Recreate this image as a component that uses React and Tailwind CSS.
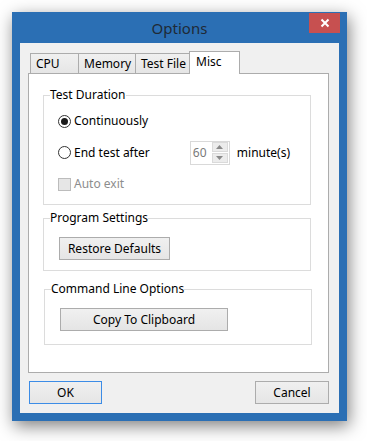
import React from "react";

const font = { fontFamily: '"Noto Sans", "Open Sans", sans-serif' };

function Btn({ children, className = "" }) {
  return (
    <div
      className={
        "flex items-center justify-center border bg-gradient-to-b from-[#f0f0f0] to-[#e5e5e5] text-[12px] leading-[16px] text-black " +
        className
      }
    >
      {children}
    </div>
  );
}

function Tab({ label, w, selected }) {
  if (selected) {
    return (
      <div
        className={
          "relative z-10 -ml-px flex h-[23px] items-start border border-b-0 border-[#acacac] bg-white pl-[6px] pt-[2px] text-[12px] leading-[16px] " +
          w
        }
      >
        {label}
      </div>
    );
  }
  return (
    <div
      className={
        "-ml-px flex h-[21px] items-center border border-b-0 border-[#acacac] bg-gradient-to-b from-[#f0f0f0] to-[#e5e5e5] pl-[5px] text-[12px] leading-[16px] first:ml-0 " +
        w
      }
    >
      {label}
    </div>
  );
}

export default function App() {
  return (
    <div className="h-[441px] w-[367px] bg-white pl-[12px] pt-[12px]" style={font}>
      <div className="flex h-[409px] w-[335px] flex-col bg-[#2b6fb4] shadow-[2px_5px_16px_rgba(0,0,0,0.5)]">
        {/* Title bar */}
        <div className="relative flex h-[31px] items-center justify-center">
          <span className="text-[15px] leading-[20px] text-[#1f2a36]">Options</span>
          <div className="absolute right-[7px] top-[1px] flex h-[20px] w-[31px] items-center justify-center bg-[#c75050]">
            <svg width="10" height="10" viewBox="0 0 10 10">
              <path d="M1.5 1.5 L8.5 8.5 M8.5 1.5 L1.5 8.5" stroke="white" strokeWidth="2" />
            </svg>
          </div>
        </div>

        {/* Client */}
        <div className="mx-[8px] mb-[8px] flex flex-1 flex-col bg-[#f0f0f0] pl-[8px] pr-[10px] pt-[8px]">
          {/* Tabs */}
          <div className="-mb-px flex h-[23px] items-end pl-[2px]">
            <Tab label="CPU" w="w-[49px]" />
            <Tab label="Memory" w="w-[58px]" />
            <Tab label="Test File" w="w-[55px]" />
            <Tab label="Misc" w="w-[51px]" selected />
          </div>

          {/* Panel */}
          <div className="h-[300px] border border-[#acacac] bg-white pl-[14px] pt-[13px] text-[12px] leading-[16px] text-black">
            {/* Test Duration */}
            <fieldset className="w-[268px] border border-[#dcdcdc] pb-[12px]">
              <legend className="ml-[6px] leading-[16px]">Test Duration</legend>
              <div className="flex flex-col pl-[14px] pt-[10px]">
                <div className="flex h-[16px] items-center">
                  <span className="flex h-[13px] w-[13px] items-center justify-center rounded-full border border-[#333]">
                    <span className="h-[7px] w-[7px] rounded-full bg-[#1a1a1a]" />
                  </span>
                  <span className="ml-[3px]">Continuously</span>
                </div>
                <div className="mt-[12px] flex h-[23px] items-center">
                  <span className="h-[13px] w-[13px] rounded-full border border-[#333]" />
                  <span className="ml-[3px]">End test after</span>
                  <div className="ml-[40px] flex h-[24px] w-[40px] items-center justify-between border border-[#d9d9d9] pl-[2px] pr-[1px]">
                    <span className="text-[#7a7a7a]">60</span>
                    <div className="flex flex-col gap-[1px]">
                      <div className="flex h-[10px] w-[16px] items-center justify-center border border-[#dadada] bg-[#ececec]">
                        <svg width="7" height="4" viewBox="0 0 7 4">
                          <path d="M0 4 L3.5 0 L7 4 Z" fill="#8a8a8a" />
                        </svg>
                      </div>
                      <div className="flex h-[10px] w-[16px] items-center justify-center border border-[#dadada] bg-[#ececec]">
                        <svg width="7" height="4" viewBox="0 0 7 4">
                          <path d="M0 0 L3.5 4 L7 0 Z" fill="#8a8a8a" />
                        </svg>
                      </div>
                    </div>
                  </div>
                  <span className="ml-[7px]">minute(s)</span>
                </div>
                <div className="mt-[12px] flex h-[16px] items-center">
                  <span className="h-[13px] w-[13px] border border-[#bcbcbc] bg-[#e6e6e6]" />
                  <span className="ml-[3px] text-[#8d8d8d]">Auto exit</span>
                </div>
              </div>
            </fieldset>

            {/* Program Settings */}
            <fieldset className="mt-[5px] w-[268px] border border-[#dcdcdc] pb-[10px]">
              <legend className="ml-[6px] leading-[16px]">Program Settings</legend>
              <div className="pl-[15px] pt-[11px]">
                <Btn className="h-[23px] w-[111px] border-[#acacac]">Restore Defaults</Btn>
              </div>
            </fieldset>

            {/* Command Line Options */}
            <fieldset className="ml-px mt-[10px] w-[268px] border border-[#dcdcdc] pb-[13px]">
              <legend className="ml-[6px] leading-[16px]">Command Line Options</legend>
              <div className="pl-[15px] pt-[11px]">
                <Btn className="h-[23px] w-[168px] border-[#acacac]">Copy To Clipboard</Btn>
              </div>
            </fieldset>
          </div>

          {/* Bottom buttons */}
          <div className="mt-[8px] flex justify-between pl-px">
            <Btn className="h-[23px] w-[73px] border-[#3c8ce6]">OK</Btn>
            <Btn className="h-[23px] w-[74px] border-[#acacac]">Cancel</Btn>
          </div>
        </div>
      </div>
    </div>
  );
}
